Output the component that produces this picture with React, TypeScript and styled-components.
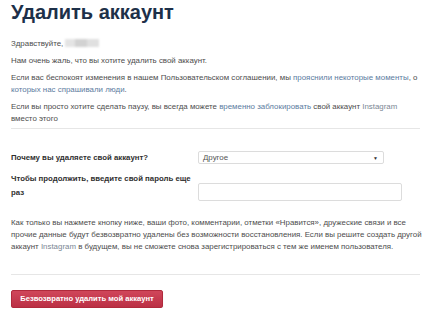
import React from 'react'
import styled, { createGlobalStyle } from 'styled-components'

const Global = createGlobalStyle`
  html, body {
    margin: 0;
    padding: 0;
    background: #ffffff;
  }
  body {
    font-family: 'Liberation Sans', Arial, sans-serif;
    color: #4a4a4a;
  }
`

const colors = {
  text: '#4d4d4d',
  title: '#1d3049',
  link: '#5b7ba0',
  rule: '#e6e6e6',
}

const Page = styled.div`
  width: 411px;
  padding: 0 0 0 11px;
  box-sizing: content-box;
`

const Title = styled.h1`
  margin: 0;
  font-size: 20px;
  line-height: 24px;
  font-weight: 700;
  color: ${colors.title};
`

const Section = styled.div`
  padding-top: 14px;
`

const Text = styled.p<{ gap?: number }>`
  margin: 0 0 ${p => p.gap ?? 5}px;
  font-size: 7.9px;
  line-height: 12px;
  color: ${colors.text};
`

const Link = styled.a`
  color: ${colors.link};
  text-decoration: none;
`

const Muted = styled.span`
  color: #7b8794;
`

const Hidden = styled.span`
  display: inline-block;
  width: 34px;
  height: 8px;
  margin-left: 2px;
  vertical-align: -1px;
  background: linear-gradient(90deg, #e4e4e4 0 30%, #d2d2d2 30% 65%, #e0e0e0 65% 100%);
  filter: blur(0.8px);
`

const Rule = styled.hr`
  margin: 0 2px 0 0;
  border: 0;
  border-top: 1px solid ${colors.rule};
`

const Form = styled.div`
  display: grid;
  grid-template-columns: 187px 206px;
  row-gap: 7px;
  align-items: start;
  padding: 22px 0 16px;
`

const Label = styled.label`
  font-size: 7.8px;
  line-height: 14px;
  font-weight: 700;
  color: #2f2f2f;
  padding-right: 2px;
`

const Select = styled.div`
  width: 186px;
  height: 13px;
  box-sizing: border-box;
  border: 1px solid #dcdcdc;
  border-radius: 2px;
  display: flex;
  align-items: center;
  justify-content: space-between;
  padding: 0 5px 0 4px;
  font-size: 7.9px;
  color: #555;
`

const Caret = styled.span`
  font-size: 5px;
  color: #333;
`

const Input = styled.div`
  width: 204px;
  height: 18px;
  margin-top: 11px;
  box-sizing: border-box;
  border: 1px solid #dcdcdc;
  border-radius: 2px;
  background: #fff;
`

const Warning = styled.div`
  padding-bottom: 21px;
`

const Footer = styled.div`
  padding-top: 12px;
`

const DangerButton = styled.button`
  height: 18px;
  width: 152px;
  padding: 0;
  border: 1px solid #b02a3c;
  border-radius: 2px;
  background: linear-gradient(#d0465a, #bb3045);
  color: #fff;
  font-family: 'Liberation Sans', Arial, sans-serif;
  font-size: 7.6px;
  font-weight: 700;
  white-space: nowrap;
  box-shadow: 0 1px 1px rgba(0, 0, 0, 0.15);
`

export default function App() {
  return (
    <>
      <Global />
      <Page>
        <Title>Удалить аккаунт</Title>
        <Section>
          <Text gap={5}>
            Здравствуйте,<Hidden />
          </Text>
          <Text>Нам очень жаль, что вы хотите удалить свой аккаунт.</Text>
          <Text>
            Если вас беспокоят изменения в нашем Пользовательском соглашении, мы{' '}
            <Link>прояснили некоторые моменты</Link>, о <Link>которых нас спрашивали люди</Link>.
          </Text>
          <Text gap={3}>
            Если вы просто хотите сделать паузу, вы всегда можете{' '}
            <Link>временно заблокировать</Link> свой аккаунт <Muted>Instagram</Muted> вместо этого
          </Text>
        </Section>
        <Rule />
        <Form>
          <Label>Почему вы удаляете свой аккаунт?</Label>
          <Select>
            <span>Другое</span>
            <Caret>▼</Caret>
          </Select>
          <Label>Чтобы продолжить, введите свой пароль еще раз</Label>
          <Input />
        </Form>
        <Warning>
          <Text gap={0}>
            Как только вы нажмете кнопку ниже, ваши фото, комментарии, отметки «Нравится», дружеские связи и все
            прочие данные будут безвозвратно удалены без возможности восстановления. Если вы решите создать другой
            аккаунт <Muted>Instagram</Muted> в будущем, вы не сможете снова зарегистрироваться с тем же именем
            пользователя.
          </Text>
        </Warning>
        <Rule />
        <Footer>
          <DangerButton>Безвозвратно удалить мой аккаунт</DangerButton>
        </Footer>
      </Page>
    </>
  )
}
